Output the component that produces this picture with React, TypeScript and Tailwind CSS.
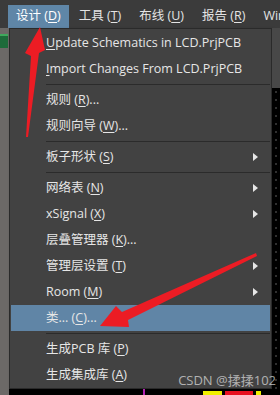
import React from 'react';

type Item =
  | { kind: 'sep' }
  | { kind: 'item'; pre: string; key: string; post: string; sub?: boolean; active?: boolean };

const items: Item[] = [
  { kind: 'item', pre: '', key: 'U', post: 'pdate Schematics in LCD.PrjPCB' },
  { kind: 'item', pre: '', key: 'I', post: 'mport Changes From LCD.PrjPCB' },
  { kind: 'sep' },
  { kind: 'item', pre: '规则 (', key: 'R', post: ')...' },
  { kind: 'item', pre: '规则向导 (', key: 'W', post: ')...' },
  { kind: 'sep' },
  { kind: 'item', pre: '板子形状 (', key: 'S', post: ')', sub: true },
  { kind: 'sep' },
  { kind: 'item', pre: '网络表 (', key: 'N', post: ')', sub: true },
  { kind: 'item', pre: 'xSignal (', key: 'X', post: ')', sub: true },
  { kind: 'item', pre: '层叠管理器 (', key: 'K', post: ')...' },
  { kind: 'item', pre: '管理层设置 (', key: 'T', post: ')', sub: true },
  { kind: 'item', pre: 'Room (', key: 'M', post: ')', sub: true },
  { kind: 'item', pre: '类... (', key: 'C', post: ')...', active: true },
  { kind: 'sep' },
  { kind: 'item', pre: '生成PCB 库 (', key: 'P', post: ')' },
  { kind: 'item', pre: '生成集成库 (', key: 'A', post: ')' },
];

const menus = [
  { label: '设计', key: 'D', active: true },
  { label: '工具', key: 'T' },
  { label: '布线', key: 'U' },
  { label: '报告', key: 'R' },
];

const font = { fontFamily: '"Segoe UI", "Open Sans", "Noto Sans CJK SC", sans-serif' };

export default function App() {
  return (
    <div
      className="relative w-[280px] h-[395px] overflow-hidden bg-[#6c6967] text-[12.5px] leading-none"
      style={font}
    >
      {/* menu bar */}
      <div className="h-[28px] bg-[#3b3b3b] flex items-end gap-[2px] pl-[8px] whitespace-nowrap">
        {menus.map((m) => (
          <div
            key={m.label}
            className={`h-[23px] shrink-0 flex items-center px-[8px] ${m.active ? 'bg-[#5f86a7] text-white' : 'text-[#e4e4e4]'}`}
          >
            {m.label} (<u className="underline-offset-2">{m.key}</u>)
          </div>
        ))}
        <div className="h-[23px] shrink-0 flex items-center pl-[8px] text-[#e4e4e4]">Win</div>
      </div>

      <div className="flex h-[367px]">
        {/* left strip */}
        <div className="w-[9px] shrink-0 bg-[#6c6967]">
          <div className="mt-[6px] h-[14px] w-[8px] bg-[#1d6b3a] border-t-[2px] border-[#3fa85c]" />
        </div>

        {/* dropdown */}
        <div className="w-[263px] shrink-0 h-[361px] bg-[#424242] border border-[#2a2a2a] pt-[1px] px-[1px] shadow-[2px_2px_3px_rgba(0,0,0,0.5)] text-[#e6e6e6]">
          {items.map((it, i) =>
            it.kind === 'sep' ? (
              <div key={i} className="h-[5px] flex items-center pl-[35px]">
                <div className="h-[1px] w-full bg-[#2b2b2b]" />
              </div>
            ) : (
              <div
                key={i}
                className={`h-[26px] flex items-center pl-[35px] pr-[12px] ${it.active ? 'bg-[#6085a6]' : ''}`}
              >
                <span className="flex-1 whitespace-nowrap">
                  {it.pre}
                  <u className="underline-offset-2">{it.key}</u>
                  {it.post}
                </span>
                {it.sub && (
                  <span className="w-0 h-0 border-y-[4px] border-y-transparent border-l-[5px] border-l-[#e6e6e6]" />
                )}
              </div>
            )
          )}
        </div>

        {/* right strip */}
        <div className="flex-1 flex flex-col">
          <div className="h-[60px] bg-[#484848]" />
          <div className="flex-1 bg-black bg-[radial-gradient(#666_0.6px,transparent_0.8px)] bg-[length:8px_8px]" />
        </div>
      </div>

      {/* bottom canvas strip */}
      <div className="absolute left-[9px] right-0 top-[389px] h-[6px] bg-black">
        <div className="absolute left-[134px] top-0 h-full w-[2px] bg-[#b020b0]" />
        <div className="absolute left-[194px] top-[2px] h-full w-[19px] bg-[#f0f000]" />
        <div className="absolute left-[216px] top-[2px] h-full w-[28px] bg-[#e81020]" />
        <div className="absolute left-[247px] top-[2px] h-full w-[5px] bg-[#f0f000]" />
      </div>

      {/* annotation arrows */}
      <svg className="absolute inset-0 pointer-events-none" width="280" height="395">
        <polygon
          points="40,27 45,50 39,53 28,137 26,137 31,56 25,53"
          fill="#ec1c24"
        />
        <polygon
          points="256,253 257,256 128,320 129,327 100,326 116,306 122,312"
          fill="#ec1c24"
        />
      </svg>

      {/* watermark */}
      <div className="absolute right-[4px] top-[374px] text-[13px] text-white/60" style={font}>
        CSDN @揉揉102
      </div>
    </div>
  );
}
